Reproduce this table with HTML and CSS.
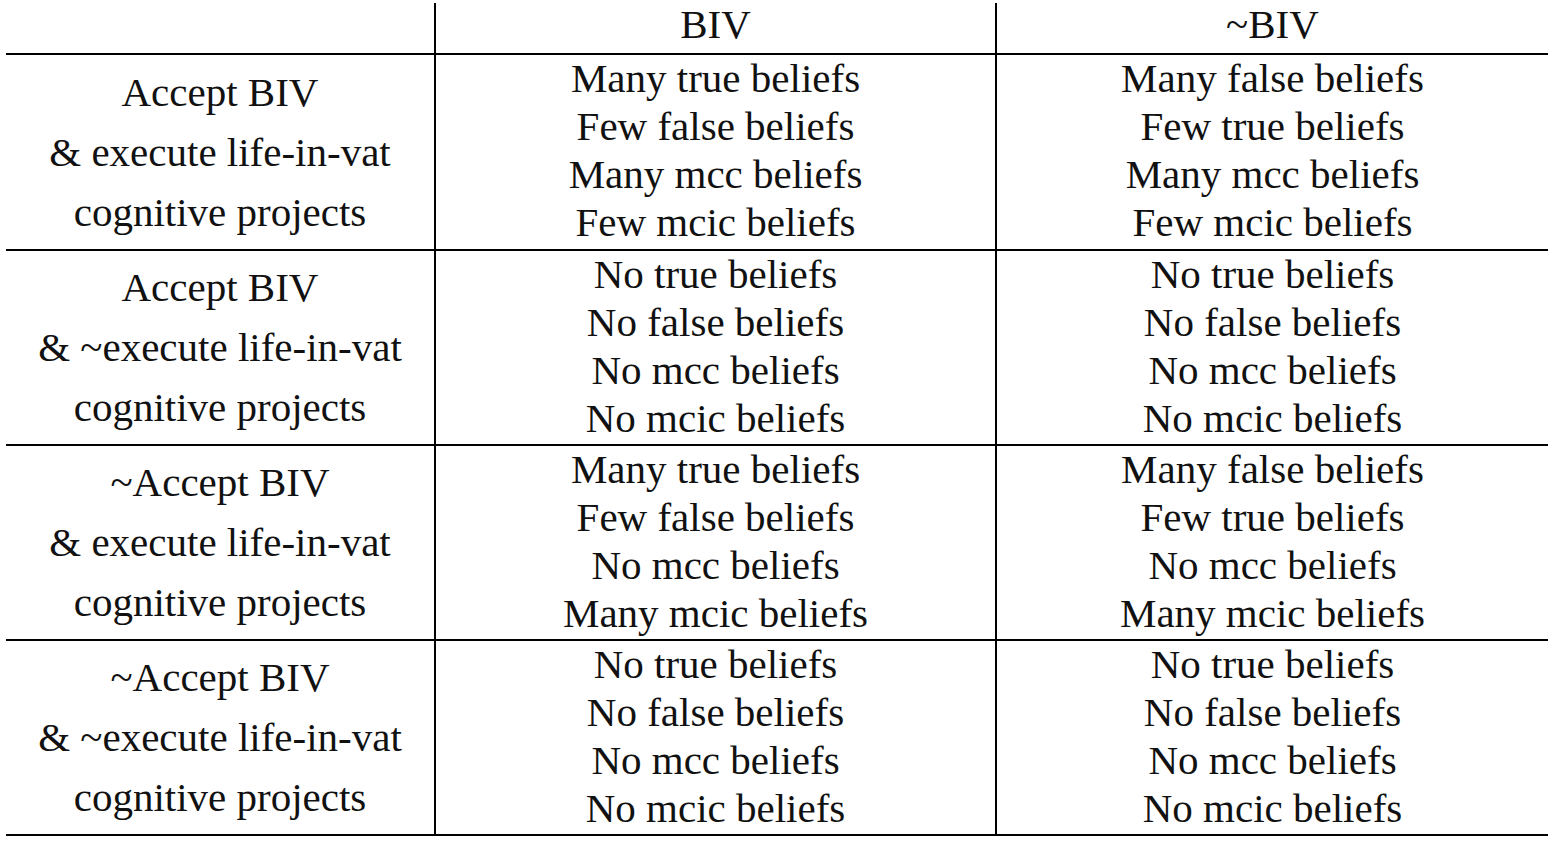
FILE: index.html
```html
<!DOCTYPE html>
<html lang="en">
<head>
<meta charset="utf-8">
<title>BIV outcomes</title>
<link rel="stylesheet" href="styles.css">
</head>
<body>
<div class="page">
  <div class="grid">
    <div class="cell head"></div>
    <div class="cell head sep">BIV</div>
    <div class="cell head sep">~BIV</div>

    <div class="cell label"><span>Accept BIV</span><span>&amp; execute life-in-vat</span><span>cognitive projects</span></div>
    <div class="cell data sep"><span>Many true beliefs</span><span>Few false beliefs</span><span>Many mcc beliefs</span><span>Few mcic beliefs</span></div>
    <div class="cell data sep"><span>Many false beliefs</span><span>Few true beliefs</span><span>Many mcc beliefs</span><span>Few mcic beliefs</span></div>

    <div class="cell label"><span>Accept BIV</span><span>&amp; ~execute life-in-vat</span><span>cognitive projects</span></div>
    <div class="cell data sep"><span>No true beliefs</span><span>No false beliefs</span><span>No mcc beliefs</span><span>No mcic beliefs</span></div>
    <div class="cell data sep"><span>No true beliefs</span><span>No false beliefs</span><span>No mcc beliefs</span><span>No mcic beliefs</span></div>

    <div class="cell label"><span>~Accept BIV</span><span>&amp; execute life-in-vat</span><span>cognitive projects</span></div>
    <div class="cell data sep"><span>Many true beliefs</span><span>Few false beliefs</span><span>No mcc beliefs</span><span>Many mcic beliefs</span></div>
    <div class="cell data sep"><span>Many false beliefs</span><span>Few true beliefs</span><span>No mcc beliefs</span><span>Many mcic beliefs</span></div>

    <div class="cell label last"><span>~Accept BIV</span><span>&amp; ~execute life-in-vat</span><span>cognitive projects</span></div>
    <div class="cell data sep last"><span>No true beliefs</span><span>No false beliefs</span><span>No mcc beliefs</span><span>No mcic beliefs</span></div>
    <div class="cell data sep last"><span>No true beliefs</span><span>No false beliefs</span><span>No mcc beliefs</span><span>No mcic beliefs</span></div>
  </div>
</div>
</body>
</html>
```
FILE: styles.css
```css
* { box-sizing: border-box; }
html, body { margin: 0; padding: 0; background: #fff; }
body {
  font-family: "Liberation Serif", "Times New Roman", serif;
  font-size: 41px;
  color: #111;
}
.page {
  padding: 3px 0 0 6px;
  width: 1548px;
}
.grid {
  display: grid;
  grid-template-columns: 428px 561px 553px;
  grid-template-rows: 50px 196px 195px 195px 197px;
}
.cell {
  display: flex;
  flex-direction: column;
  align-items: center;
  justify-content: center;
  text-align: center;
  white-space: nowrap;
}
.cell.sep { border-left: 2px solid #000; }
.head { line-height: 48px; padding-bottom: 8px; }
.label, .data { border-top: 2px solid #000; }
.label { line-height: 60px; padding-bottom: 1px; }
.data { line-height: 48px; padding-bottom: 4px; }
.last { border-bottom: 2px solid #000; }
```
